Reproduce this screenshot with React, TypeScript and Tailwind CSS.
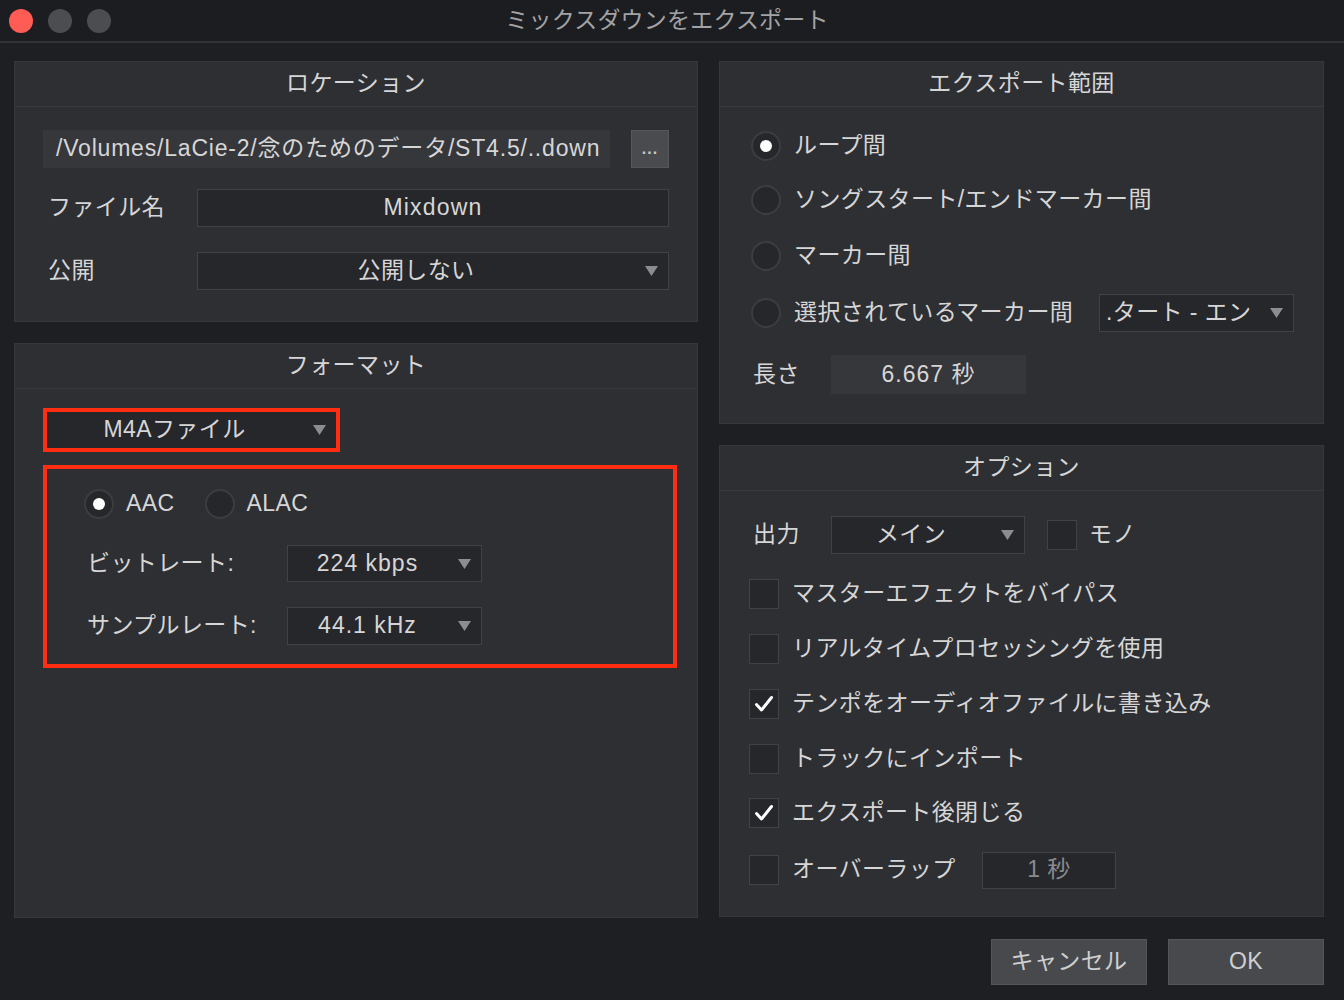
import React from "react";

const FONT = { fontFamily: '"Liberation Sans", "Noto Sans CJK JP", sans-serif' };

function Arrow() {
  return (
    <svg width="13" height="10" viewBox="0 0 13 10">
      <polygon points="0,0 13,0 6.5,10" fill="#8c8d90" />
    </svg>
  );
}

function Dropdown({ text, className = "", left = false, latin = false }: { text: string; className?: string; left?: boolean; latin?: boolean }) {
  return (
    <div className={`flex items-center bg-[#26272b] border border-[#414246] ${className}`}>
      <div className={`flex-1 min-w-0 whitespace-nowrap ${left ? "text-left pl-[6px] overflow-hidden" : "text-center"} ${latin ? "tracking-[1px]" : ""}`}>{text}</div>
      <div className="w-[34px] flex justify-center shrink-0">
        <Arrow />
      </div>
    </div>
  );
}

function Radio({ on = false }: { on?: boolean }) {
  return (
    <div className="w-[30px] h-[30px] rounded-full bg-[#26272b] border-2 border-[#3c3d41] flex items-center justify-center shrink-0">
      {on && <div className="w-[12px] h-[12px] rounded-full bg-white" />}
    </div>
  );
}

function Check({ on = false }: { on?: boolean }) {
  return (
    <div className="w-[30px] h-[30px] bg-[#26272b] border border-[#414246] flex items-center justify-center shrink-0">
      {on && (
        <svg width="20" height="18" viewBox="0 0 20 18">
          <path d="M2.5 9.5 L7.5 15 L17.5 2.5" stroke="#ffffff" strokeWidth="3" fill="none" strokeLinecap="round" strokeLinejoin="round" />
        </svg>
      )}
    </div>
  );
}

function Panel({ title, className = "", children }: { title: string; className?: string; children: React.ReactNode }) {
  return (
    <div className={`bg-[#2e2f33] border border-[#36373b] flex flex-col ${className}`}>
      <div className="h-[45px] shrink-0 flex items-center justify-center border-b border-[#393a3e]">{title}</div>
      {children}
    </div>
  );
}

export default function App() {
  return (
    <div className="w-[1344px] h-[1000px] bg-[#1e1f22] flex flex-col text-[23px] leading-[1.3] tracking-[0.4px] text-[#d6d6d7]" style={FONT}>
      {/* title bar */}
      <div className="h-[43px] shrink-0 flex items-center bg-[#1c1d20] border-b-2 border-[#323337]">
        <div className="w-[130px] flex items-center gap-[15px] pl-[9px]">
          <div className="w-[24px] h-[24px] rounded-full bg-[#fe5c55]" />
          <div className="w-[24px] h-[24px] rounded-full bg-[#4c4d50]" />
          <div className="w-[24px] h-[24px] rounded-full bg-[#4c4d50]" />
        </div>
        <div className="flex-1 text-center text-[23px] tracking-[0.2px] text-[#a3a3a5] pr-[10px]">ミックスダウンをエクスポート</div>
        <div className="w-[130px]" />
      </div>

      {/* content */}
      <div className="flex gap-[21px] pl-[14px] pt-[18px]">
        {/* left */}
        <div className="w-[684px] flex flex-col gap-[21px]">
          <Panel title="ロケーション" className="h-[261px]">
            <div className="flex flex-col px-[28px] pt-[23px]">
              <div className="flex items-center gap-[21px] h-[38px]">
                <div className="flex-1 h-[38px] bg-[#36373b] flex items-center pl-[13px] whitespace-nowrap overflow-hidden tracking-[0.8px]">/Volumes/LaCie-2/念のためのデータ/ST4.5/..down</div>
                <div className="w-[38px] h-[38px] bg-[#4a4b4f] border border-[#55565a] flex items-center justify-center text-[16px] text-[#c9c9c9] font-bold tracking-[1px]">...</div>
              </div>
              <div className="flex items-center h-[38px] mt-[21px]">
                <div className="w-[154px] pl-[5px] shrink-0">ファイル名</div>
                <div className="flex-1 h-[38px] bg-[#26272b] border border-[#414246] flex items-center justify-center tracking-[1.2px]">Mixdown</div>
              </div>
              <div className="flex items-center h-[38px] mt-[25px]">
                <div className="w-[154px] pl-[5px] shrink-0">公開</div>
                <Dropdown text="公開しない" className="flex-1 h-[38px]" />
              </div>
            </div>
          </Panel>

          <Panel title="フォーマット" className="h-[575px]">
            <div className="flex flex-col pl-[28px] pt-[19px]">
              <div className="w-[297px] h-[44px] border-4 border-[#ff2e12]">
                <Dropdown text="M4Aファイル" className="w-full h-full border-0" />
              </div>
              <div className="w-[634px] h-[203px] mt-[13px] border-4 border-[#ff2e12] flex flex-col pl-[37px] pt-[20px]">
                <div className="flex items-center h-[30px]">
                  <Radio on />
                  <span className="ml-[12px]">AAC</span>
                  <div className="ml-[30px]">
                    <Radio />
                  </div>
                  <span className="ml-[12px]">ALAC</span>
                </div>
                <div className="flex items-center mt-[26px] h-[37px]">
                  <div className="w-[203px] pl-[3px] shrink-0">ビットレート:</div>
                  <Dropdown text="224 kbps" latin className="w-[195px] h-[37px]" />
                </div>
                <div className="flex items-center mt-[25px] h-[38px]">
                  <div className="w-[203px] pl-[3px] shrink-0">サンプルレート:</div>
                  <Dropdown text="44.1 kHz" latin className="w-[195px] h-[38px]" />
                </div>
              </div>
            </div>
          </Panel>
        </div>

        {/* right */}
        <div className="w-[605px] flex flex-col gap-[21px]">
          <Panel title="エクスポート範囲" className="h-[363px]">
            <div className="flex flex-col pl-[31px] pr-[29px] pt-[20px]">
              <div className="flex items-center h-[38px]">
                <Radio on />
                <span className="ml-[13px]">ループ間</span>
              </div>
              <div className="flex items-center h-[38px] mt-[16px]">
                <Radio />
                <span className="ml-[13px]">ソングスタート/エンドマーカー間</span>
              </div>
              <div className="flex items-center h-[38px] mt-[18px]">
                <Radio />
                <span className="ml-[13px]">マーカー間</span>
              </div>
              <div className="flex items-center h-[38px] mt-[19px]">
                <Radio />
                <span className="ml-[13px]">選択されているマーカー間</span>
                <Dropdown text=".タート - エン" left className="ml-auto w-[195px] h-[38px]" />
              </div>
              <div className="flex items-center h-[39px] mt-[23px]">
                <div className="w-[80px] pl-[2px] shrink-0">長さ</div>
                <div className="w-[195px] h-[39px] bg-[#36373b] flex items-center justify-center tracking-[1px]">6.667 秒</div>
              </div>
            </div>
          </Panel>

          <Panel title="オプション" className="h-[472px]">
            <div className="flex flex-col pl-[29px] pt-[25px]">
              <div className="flex items-center h-[38px]">
                <div className="w-[82px] pl-[4px] shrink-0">出力</div>
                <Dropdown text="メイン" className="w-[194px] h-[38px]" />
                <div className="ml-[22px]">
                  <Check />
                </div>
                <span className="ml-[12px]">モノ</span>
              </div>
              <div className="flex items-center h-[38px] mt-[21px]">
                <Check />
                <span className="ml-[13px]">マスターエフェクトをバイパス</span>
              </div>
              <div className="flex items-center h-[38px] mt-[17px]">
                <Check />
                <span className="ml-[13px]">リアルタイムプロセッシングを使用</span>
              </div>
              <div className="flex items-center h-[38px] mt-[17px]">
                <Check on />
                <span className="ml-[13px]">テンポをオーディオファイルに書き込み</span>
              </div>
              <div className="flex items-center h-[38px] mt-[17px]">
                <Check />
                <span className="ml-[13px]">トラックにインポート</span>
              </div>
              <div className="flex items-center h-[38px] mt-[16px]">
                <Check on />
                <span className="ml-[13px]">エクスポート後閉じる</span>
              </div>
              <div className="flex items-center h-[38px] mt-[19px]">
                <Check />
                <span className="ml-[13px] w-[190px] shrink-0">オーバーラップ</span>
                <div className="w-[134px] h-[37px] bg-[#26272b] border border-[#414246] flex items-center justify-center text-[#8a8b8e]">1 秒</div>
              </div>
            </div>
          </Panel>
        </div>
      </div>

      {/* buttons */}
      <div className="flex justify-end gap-[21px] pr-[20px] mt-[21px]">
        <div className="w-[156px] h-[46px] bg-[#48494d] border border-[#545559] flex items-center justify-center text-[#cfcfd0]">キャンセル</div>
        <div className="w-[156px] h-[46px] bg-[#48494d] border border-[#545559] flex items-center justify-center text-[#cfcfd0]">OK</div>
      </div>
    </div>
  );
}
